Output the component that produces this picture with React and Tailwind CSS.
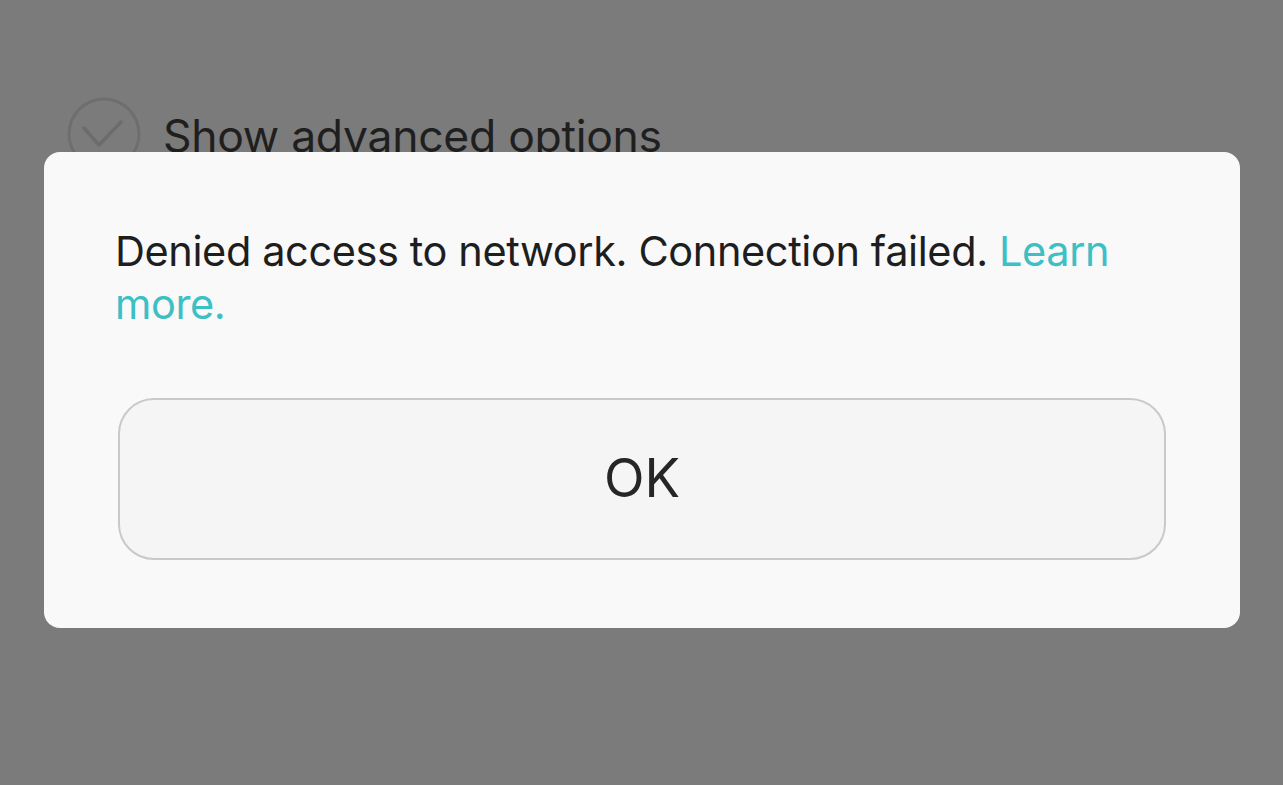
import React from 'react';

const App = () => {
  return (
    <div className="relative w-[1283px] h-[785px] overflow-hidden bg-[#7b7b7b]" style={{ fontFamily: 'Inter, "Noto Sans", sans-serif' }}>
      {/* Background page (dimmed) */}
      <div className="flex items-center gap-[22px] pl-[67px] pt-[97px]">
        <svg width="74" height="74" viewBox="0 0 74 74" fill="none">
          <circle cx="37" cy="37" r="35" stroke="#6e6e6e" strokeWidth="3" />
          <path d="M17 31 L32 48 L54 25" stroke="#6c6c6c" strokeWidth="3.5" strokeLinecap="round" strokeLinejoin="round" />
        </svg>
        <span className="text-[44.5px] leading-none text-[#1f1f1f] tracking-[-0.3px] mt-[4px]">Show advanced options</span>
      </div>

      {/* Dialog */}
      <div className="absolute left-[44px] top-[152px] w-[1196px] h-[476px] rounded-[16px] bg-[#f9f9f9] pl-[71px] pr-[60px] pt-[73px]">
        <p className="text-[41.5px] leading-[53px] text-[#1e1e1e] tracking-[-0.4px]">
          Denied access to network. Connection failed. <span className="text-[#3cc0c6]">Learn more.</span>
        </p>
        <button className="mt-[67px] ml-[3px] w-[1048px] h-[162px] rounded-[36px] border-2 border-[#c9c9c9] bg-[#f5f5f5] flex items-center justify-center text-[53px] text-[#262626]">
          OK
        </button>
      </div>
    </div>
  );
};

export default App;
